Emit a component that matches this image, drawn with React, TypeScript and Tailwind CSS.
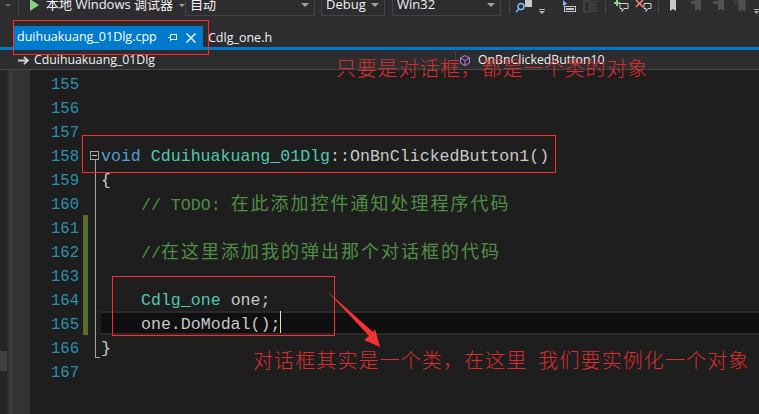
import type { ReactNode } from 'react';

const uiFont = 'font-["Open_Sans","Noto_Sans_CJK_SC",sans-serif]';
const noteFont = 'font-["Noto_Sans_CJK_SC",sans-serif]';

function Dropdown({ label, width }: { label: string; width: string }) {
  return (
    <div className={`flex items-center justify-between h-[22px] shrink-0 px-[4px] border border-[#434346] text-[#f1f1f1] text-[13px] ${width}`}>
      <span>{label}</span>
      <span className="w-0 h-0 border-x-[4px] border-x-transparent border-t-[4px] border-t-[#a0a0a0] mr-[1px]" />
    </div>
  );
}

function Toolbar() {
  return (
    <div className={`flex items-end h-[16px] overflow-hidden bg-[#2d2d30] text-[#f1f1f1] ${uiFont}`}>
      <div className="flex items-center w-[18px] h-[22px] pl-[5px]">
        <span className="w-0 h-0 border-x-[3px] border-x-transparent border-t-[3px] border-t-[#707070]" />
      </div>
      <div className="w-[1px] h-[16px] bg-[#434346]" />
      <div className="flex items-center h-[22px] ml-[11px] w-[155px] text-[13px] whitespace-nowrap">
        <svg width="9" height="12" viewBox="0 0 9 12" className="shrink-0"><path d="M0 0 L9 6 L0 12Z" fill="#89d185" /></svg>
        <span className="ml-[7px]">本地 Windows 调试器</span>
        <span className="ml-[6px] w-0 h-0 border-x-[3px] border-x-transparent border-t-[3px] border-t-[#a0a0a0]" />
      </div>
      <Dropdown label="自动" width="w-[130px]" />
      <div className="w-[6px] shrink-0" />
      <Dropdown label="Debug" width="w-[64px]" />
      <div className="w-[7px] shrink-0" />
      <Dropdown label="Win32" width="w-[109px]" />
      <div className="w-[4px] shrink-0" />
      <ToolbarIcons />
    </div>
  );
}

function ToolbarIcons() {
  return (
    <svg width="254" height="16" viewBox="0 0 254 16" className="shrink-0">
      <rect x="4" y="0" width="1" height="15" fill="#434346" />
      <path d="M20 0 h7 v7 h-7Z" fill="#c8c8c8" />
      <circle cx="16" cy="6.500" r="3" fill="#2d2d30" stroke="#75beff" strokeWidth="1.500" />
      <path d="M14 9 L11 12" stroke="#75beff" strokeWidth="1.500" />
      <rect x="34" y="9" width="6" height="1" fill="#b0b0b0" />
      <path d="M34 11 h6 l-3 3Z" fill="#b0b0b0" />
      <path d="M47 0 v14" stroke="#46464a" strokeDasharray="1 2" />
      <rect x="59.500" y="6.500" width="11" height="5" fill="none" stroke="#c8c8c8" />
      <rect x="61" y="8" width="8" height="2" fill="#c8c8c8" />
      <path d="M58 0 L62 4 L60 5 L58 6Z" fill="#75beff" />
      <path d="M79 1 h6 v11 h-6Z M86 2 h6 M86 5 h6 M86 8 h6 M86 11 h6" fill="none" stroke="#505055" strokeWidth="1.200" />
      <rect x="100" y="0" width="1" height="15" fill="#434346" />
      <path d="M115 3.500 h8 v5 h-4 l-2 3 v-3 h-2Z" fill="none" stroke="#d0d0d0" />
      <path d="M109 3 h6 M112 0 v6" stroke="#89d185" strokeWidth="2" />
      <path d="M139 3.500 h7 v5 h-3 l-2 3 v-3 h-2Z" fill="none" stroke="#d0d0d0" />
      <path d="M131 0 l7 7 M138 0 l-7 7" stroke="#f48771" strokeWidth="1.500" />
      <rect x="153" y="0" width="1" height="15" fill="#434346" />
      <path d="M165 0 h6 v11 l-3 -2 l-3 2Z" fill="#c8c8c8" />
      <path d="M190 0 h6 v11 l-3 -2 l-3 2Z M186 1 h5 v3 h-5Z" fill="#505055" />
      <path d="M213 0 h6 v11 l-3 -2 l-3 2Z M208 1 h6 v3 h-6Z" fill="#505055" />
      <path d="M234 0 h6 v11 l-3 -2 l-3 2Z M229 0 l5 5 M234 0 l-5 5" fill="#505055" stroke="#505055" />
      <rect x="249" y="9" width="5" height="1" fill="#b0b0b0" />
      <path d="M249 11 h5 l-2.500 3Z" fill="#b0b0b0" />
    </svg>
  );
}

function TabBar() {
  return (
    <div className={`flex items-end h-[34px] bg-[#2d2d30] border-b-[3px] border-[#007acc] pl-[13px] text-[12.500px] ${uiFont}`}>
      <div className="flex items-center h-[21px] w-[190px] pl-[4px] pt-[2px] bg-[#007acc] text-white">
        <span className="w-[151px]">duihuakuang_01Dlg.cpp</span>
        <svg width="9" height="7" viewBox="0 0 9 7" className="shrink-0">
          <path d="M0 3.500 H2.500 M2.500 0 V7 M2.500 .5 H9 M2.500 5.500 H9 M8.500 .5 V5.500" stroke="#e8f3fb" fill="none" />
        </svg>
        <svg width="10" height="10" viewBox="0 0 10 10" className="ml-[9px] shrink-0">
          <path d="M.5 .5 L9.500 9.500 M9.500 .5 L.5 9.500" stroke="#e8f3fb" strokeWidth="1.500" />
        </svg>
      </div>
      <span className="ml-[5px] h-[21px] leading-[24px] text-[#f1f1f1]">Cdlg_one.h</span>
    </div>
  );
}

function NavBar() {
  return (
    <div className={`flex items-center h-[20px] pt-[1px] bg-[#2d2d30] border-b border-[#46464a] text-[12.300px] text-[#f1f1f1] ${uiFont}`}>
      <div className="flex items-center w-[456px] h-full pl-[18px] border-r border-[#3f3f46]">
        <svg width="11" height="9" viewBox="0 0 11 9"><path d="M0 4.500 H9 M6 1 L10 4.500 L6 8" fill="none" stroke="#d0d0d0" strokeWidth="1.800" /></svg>
        <span className="ml-[5px]">Cduihuakuang_01Dlg</span>
      </div>
      <svg width="10" height="11" viewBox="0 0 10 11" className="ml-[4px]">
        <path d="M5 .5 L9.500 3 V8 L5 10.500 L.5 8 V3Z M.5 3 L5 5.500 L9.500 3 M5 5.500 V10.500" fill="none" stroke="#b180d7" />
      </svg>
      <span className="ml-[8px]">OnBnClickedButton10</span>
    </div>
  );
}

const VOID = 'text-[#569cd6]';
const TYPE = 'text-[#4ec9b0]';
const COMMENT = 'text-[#4f8f45]';
const PLAIN = 'text-[#c8c8c8]';
// CJK in the editor takes two cells of the monospace grid
const CJK = 'text-[18px] tracking-[2px]';

const lines: { n: number; body?: ReactNode; indent?: boolean }[] = [
  { n: 155 },
  { n: 156 },
  { n: 157 },
  {
    n: 158,
    body: (
      <>
        <span className={VOID}>void</span> <span className={TYPE}>Cduihuakuang_01Dlg</span>
        <span className={PLAIN}>::OnBnClickedButton1()</span>
      </>
    ),
  },
  { n: 159, body: <span className={PLAIN}>{'{'}</span> },
  {
    n: 160,
    indent: true,
    body: (
      <span className={COMMENT}>
        // TODO: <span className={CJK}>在此添加控件通知处理程序代码</span>
      </span>
    ),
  },
  { n: 161 },
  {
    n: 162,
    indent: true,
    body: (
      <span className={COMMENT}>
        //<span className={CJK}>在这里添加我的弹出那个对话框的代码</span>
      </span>
    ),
  },
  { n: 163 },
  {
    n: 164,
    indent: true,
    body: (
      <>
        <span className={TYPE}>Cdlg_one</span> <span className={PLAIN}>one;</span>
      </>
    ),
  },
  { n: 165, indent: true, body: <span className={PLAIN}>one.DoModal();</span> },
  { n: 166, body: <span className={PLAIN}>{'}'}</span> },
  { n: 167 },
];

function Editor() {
  return (
    <div className="flex h-[344px] bg-[#1e1e1e]">
      <div className="flex w-[30px] bg-[#333333]">
        <div className="w-[7px] flex flex-col bg-[#252526]">
          <div className="h-[281px]" />
          <div className="h-[20px] bg-[#3f4044]" />
        </div>
        <div className="w-[2px] bg-[#2d2d30]" />
        <div className="w-[3px] bg-[#3a3a3f]" />
      </div>
      <div className='relative flex-1 pt-[1px] font-["Liberation_Mono","Noto_Sans_CJK_SC",monospace] text-[16.600px]'>
        {lines.map(line => (
          <div key={line.n} className="flex h-[24px] leading-[28px]">
            <span className="w-[49px] text-right text-[#2b91af] text-[15.600px]">{line.n}</span>
            <div className={`ml-[22px] flex-1 whitespace-pre ${line.n === 165 ? 'bg-[#0f0f0f] border-y-2 border-[#2a2a2a] leading-[24px]' : ''} ${line.indent ? 'pl-[40px]' : ''}`}>
              {line.body}
              {line.n === 165 && <span className="relative -top-[2px] inline-block w-[1px] h-[22px] align-top bg-[#dcdcdc]" />}
            </div>
          </div>
        ))}
        {/* change bar and outlining */}
        <div className="absolute left-[53px] top-[145px] w-[5px] h-[120px] bg-[#586d2d]" />
        <div className="absolute left-[60px] top-[81px] w-[9px] h-[9px] border border-[#a5a5a5] flex items-center justify-center">
          <div className="w-[5px] h-[1px] bg-[#c8c8c8]" />
        </div>
        <div className="absolute left-[65px] top-[90px] w-[1px] h-[197px] bg-[#a5a5a5]" />
        <div className="absolute left-[65px] top-[287px] w-[5px] h-[1px] bg-[#a5a5a5]" />
      </div>
    </div>
  );
}

export default function App() {
  return (
    <div className="relative w-[759px] h-[414px] overflow-hidden bg-[#2d2d30]">
      <Toolbar />
      <TabBar />
      <NavBar />
      <Editor />

      {/* screenshot annotations */}
      <div className="absolute left-[13px] top-[20px] w-[196px] h-[35px] border border-[#ff2c2c]" />
      <div className="absolute left-[82px] top-[135px] w-[474px] h-[38px] border border-[#ff2c2c]" />
      <div className="absolute left-[112px] top-[276px] w-[223px] h-[60px] border border-[#ff2c2c]" />
      <svg width="60" height="62" viewBox="0 0 60 62" className="absolute left-[325px] top-[290px]">
        <path d="M2 1 L48 42 L50 39 L55 57 L39 50 L44 46Z" fill="#f53333" />
      </svg>
      <div className={`absolute left-[336px] top-[54px] text-[20px] leading-[28px] tracking-[0.8px] font-light text-[#d92f2f] whitespace-pre ${noteFont}`}>
        只要是对话框，都是一个类的对象
      </div>
      <div className={`absolute left-[253px] top-[346px] text-[20px] leading-[28px] tracking-[1.1px] font-light text-[#d92f2f] whitespace-pre ${noteFont}`}>
        对话框其实是一个类，在这里  我们要实例化一个对象
      </div>
    </div>
  );
}
